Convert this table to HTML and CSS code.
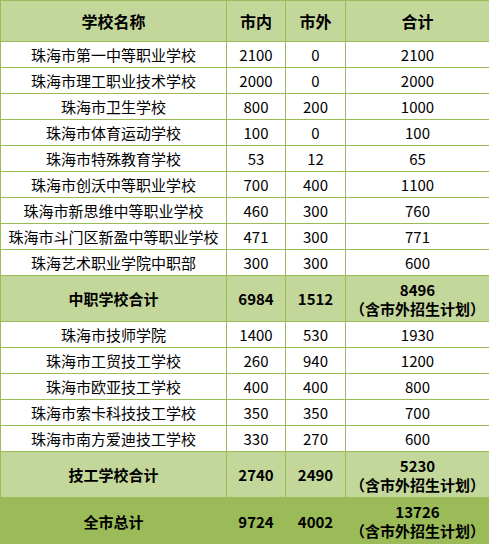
FILE: index.html
```html
<!DOCTYPE html>
<html lang="zh-CN">
<head>
<meta charset="utf-8">
<title>珠海市中职学校招生计划</title>
<link rel="stylesheet" href="styles.css">
</head>
<body>
<table class="plan">
  <colgroup>
    <col class="c-name">
    <col class="c-in">
    <col class="c-out">
    <col class="c-sum">
  </colgroup>
  <thead>
    <tr class="head"><th>学校名称</th><th>市内</th><th>市外</th><th>合计</th></tr>
  </thead>
  <tbody>
    <tr class="row"><td>珠海市第一中等职业学校</td><td>2100</td><td>0</td><td>2100</td></tr>
    <tr class="row"><td>珠海市理工职业技术学校</td><td>2000</td><td>0</td><td>2000</td></tr>
    <tr class="row"><td>珠海市卫生学校</td><td>800</td><td>200</td><td>1000</td></tr>
    <tr class="row"><td>珠海市体育运动学校</td><td>100</td><td>0</td><td>100</td></tr>
    <tr class="row"><td>珠海市特殊教育学校</td><td>53</td><td>12</td><td>65</td></tr>
    <tr class="row"><td>珠海市创沃中等职业学校</td><td>700</td><td>400</td><td>1100</td></tr>
    <tr class="row"><td>珠海市新思维中等职业学校</td><td>460</td><td>300</td><td>760</td></tr>
    <tr class="row"><td>珠海市斗门区新盈中等职业学校</td><td>471</td><td>300</td><td>771</td></tr>
    <tr class="row"><td>珠海艺术职业学院中职部</td><td>300</td><td>300</td><td>600</td></tr>
    <tr class="sub"><td>中职学校合计</td><td>6984</td><td>1512</td><td>8496<br>（含市外招生计划）</td></tr>
    <tr class="row"><td>珠海市技师学院</td><td>1400</td><td>530</td><td>1930</td></tr>
    <tr class="row"><td>珠海市工贸技工学校</td><td>260</td><td>940</td><td>1200</td></tr>
    <tr class="row"><td>珠海市欧亚技工学校</td><td>400</td><td>400</td><td>800</td></tr>
    <tr class="row"><td>珠海市索卡科技技工学校</td><td>350</td><td>350</td><td>700</td></tr>
    <tr class="row"><td>珠海市南方爱迪技工学校</td><td>330</td><td>270</td><td>600</td></tr>
    <tr class="sub"><td>技工学校合计</td><td>2740</td><td>2490</td><td>5230<br>（含市外招生计划）</td></tr>
    <tr class="total"><td>全市总计</td><td>9724</td><td>4002</td><td>13726<br>（含市外招生计划）</td></tr>
  </tbody>
</table>
</body>
</html>
```
FILE: styles.css
```css
html, body {
  margin: 0;
  padding: 0;
  background: #ffffff;
}

.plan {
  border-collapse: collapse;
  table-layout: fixed;
  width: 489px;
  font-family: "Noto Sans CJK SC", "Noto Sans", sans-serif;
  font-size: 15px;
  color: #000;
}

.c-name { width: 226px; }
.c-in { width: 59px; }
.c-out { width: 60px; }
.c-sum { width: 144px; }

.plan th,
.plan td {
  border: 1px solid #9bbb59;
  padding: 0;
  text-align: center;
  vertical-align: middle;
  white-space: nowrap;
  line-height: 19px;
}

.head th {
  height: 40px;
  background: #c4d79b;
  font-size: 16px;
  font-weight: bold;
}

.row td {
  height: 25px;
}

.sub td {
  height: 45px;
  background: #c4d79b;
  font-weight: bold;
}

.total td {
  height: 46px;
  background: #9bbb59;
  font-weight: bold;
}
```
